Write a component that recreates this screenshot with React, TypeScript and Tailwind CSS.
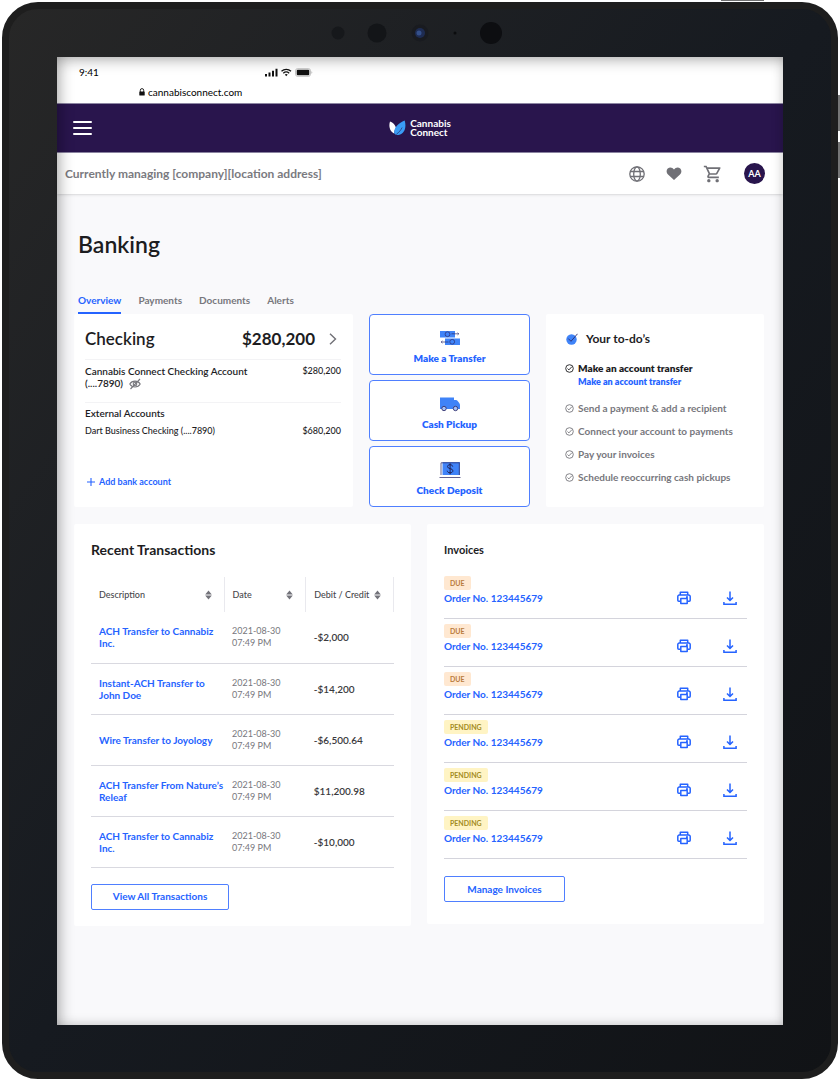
import { MdOutlineShoppingCart } from "react-icons/md";

type Transaction = { description: string; amount: string };

const tabs = ["Overview", "Payments", "Documents", "Alerts"];

const todos = [
    "Send a payment & add a recipient",
    "Connect your account to payments",
    "Pay your invoices",
    "Schedule reoccurring cash pickups",
];

const transactions: Transaction[] = [
    { description: "ACH Transfer to Cannabiz Inc.", amount: "-$2,000" },
    { description: "Instant-ACH Transfer to John Doe", amount: "-$14,200" },
    { description: "Wire Transfer to Joyology", amount: "-$6,500.64" },
    { description: "ACH Transfer From Nature’s Releaf", amount: "$11,200.98" },
    { description: "ACH Transfer to Cannabiz Inc.", amount: "-$10,000" },
];

const invoices = ["DUE", "DUE", "DUE", "PENDING", "PENDING", "PENDING"];

const TransferIcon = () => (
    <svg width="20" height="16" viewBox="0 0 20 16" fill="none">
        <path d="M0 1h15v6.500H0zM5 8.500h15V15H5z" fill="#3f83f8" />
        <g stroke="#2c2b6b" strokeWidth="0.7">
            <circle cx="7.5" cy="4.2" r="2.4" />
            <circle cx="12.2" cy="11.8" r="2.4" />
            <path d="M11.500 3.800h7M17.600 2.700l1.200 1.100-1.200 1.100M8.500 12H1.200M2.400 10.900 1.200 12l1.200 1.100" />
        </g>
    </svg>
);

const TruckIcon = () => (
    <svg width="20" height="16" viewBox="0 0 20 16" fill="none">
        <path d="M0 1.500h14v2.500h2.200c1 0 3.800 3.500 3.800 5V13H0z" fill="#3f83f8" />
        <circle cx="4" cy="12.500" r="2.200" fill="#a9c3f8" stroke="#34336e" strokeWidth="0.9" />
        <circle cx="15.500" cy="12.500" r="2.200" fill="#a9c3f8" stroke="#34336e" strokeWidth="0.9" />
    </svg>
);

const DepositIcon = () => (
    <svg width="22" height="16" viewBox="0 0 22 16" fill="none">
        <path d="M3.500 0H21v13H3.500z" fill="#3f83f8" />
        <path d="M2 13V.8h18.300V13M.5 15.500h21" stroke="#3b3a72" strokeWidth="0.8" />
        <path d="M13.700 4.600c-.2-1.200-1.100-1.900-2.600-1.900-1.600 0-2.600.8-2.600 1.900 0 2.700 5.400 1.300 5.400 4.200 0 1.200-1.100 2-2.800 2s-2.700-.8-2.900-2.100M11.100 1.300v11" stroke="#1f2057" strokeWidth="1" />
    </svg>
);

const PrinterIcon = () => (
    <svg width="14" height="14" viewBox="0 0 14 14" fill="none" stroke="currentColor" strokeWidth="1.500" strokeLinejoin="round">
        <path d="M3.300 4V1.200h7.400V4" />
        <path d="M3.300 10.200H1.800a1 1 0 0 1-1-1V5.500A1.500 1.500 0 0 1 2.300 4h9.400a1.500 1.500 0 0 1 1.500 1.500v3.700a1 1 0 0 1-1 1h-1.500" />
        <path d="M3.800 7.600h6.400v5H3.800zM9 5.900h2" />
    </svg>
);

const DownloadIcon = () => (
    <svg width="14" height="14" viewBox="0 0 14 14" fill="none" stroke="currentColor" strokeWidth="1.500">
        <path d="M7 .5v8.800M4 6.500l3 3 3-3M.9 11v2.200h12.200V11" />
    </svg>
);

const SortIcon = () => (
    <svg width="7" height="10" viewBox="0 0 7 10" fill="#73737a">
        <path d="M3.500.5 6.800 4.400H.2zM3.500 9.500.2 5.600h6.600z" />
    </svg>
);

const CheckCircle = () => (
    <svg className="shrink-0" width="9" height="9" viewBox="0 0 9 9" fill="none" stroke="currentColor" strokeWidth="0.9">
        <circle cx="4.500" cy="4.500" r="3.800" />
        <path d="m2.500 4.500 1.400 1.400 3-3.200" />
    </svg>
);

const Logo = () => (
    <div className="flex items-center gap-1">
        <svg width="17" height="16" viewBox="0 0 17 16">
            <path d="M1 1.500C4 2.700 6.600 5 7 8c-1.300 1.600-2 3.500-1.600 5.400C1.500 12.500-.8 7 1 1.500z" fill="#fff" />
            <path d="M15.700.6C17.500 7 16 13.500 9.500 15c-2 .4-4-.6-4.300-2.200C5.100 7.500 9.500 3 15.700.6z" fill="#3a9cf5" />
            <path d="M7.500 14.200c2.600-2 4.300-4 5.600-6.700" stroke="#29154d" strokeWidth="0.6" fill="none" />
        </svg>
        <p className="text-[10px] leading-[9px] font-bold text-white">
            Cannabis
            <br />
            Connect
        </p>
    </div>
);

const StatusBar = () => (
    <div className="bg-white pt-[7px] pb-[3px] text-black">
        <div className="flex h-4 items-center px-[22px] text-[10px]">
            <span className="w-[186px]">9:41</span>
            <svg width="48" height="9" viewBox="0 0 48 9">
                <path d="M0 6h2v2.500H0zM3.500 4.500h2v4h-2zM7 2.800h2v5.700H7zM10.500.8h2v7.700h-2z" fill="#111" />
                <g fill="none" stroke="#111" strokeWidth="1.300">
                    <path d="M16.500 3.200c2.700-2.500 6.800-2.500 9.500 0M18.300 5.200c1.700-1.500 4.200-1.500 5.900 0" />
                </g>
                <path d="M19.800 6.600c.8-.7 2.100-.7 2.900 0l-1.450 1.700z" fill="#111" />
                <rect x="30.500" y=".7" width="15" height="7.600" rx="2" fill="none" stroke="#aaa" strokeWidth=".7" />
                <rect x="31.700" y="1.700" width="12.600" height="5.600" rx="1" fill="#111" />
                <path d="M46.500 3.200c1 .5 1 2 0 2.600z" fill="#aaa" />
            </svg>
        </div>
        <div className="mt-1 flex h-4 items-center gap-[3px] pl-[82px] text-[10px]">
            <svg width="6" height="8" viewBox="0 0 6 8">
                <path d="M1.300 4V2.300a1.700 1.700 0 0 1 3.400 0V4" fill="none" stroke="#111" strokeWidth="0.900" />
                <rect x="0.300" y="3.400" width="5.400" height="4.200" rx="0.600" fill="#111" />
            </svg>
            <span>cannabisconnect.com</span>
        </div>
    </div>
);

const Navbar = () => (
    <header>
        <div className="grid h-[50px] grid-cols-[1fr_auto_1fr] items-center border-y border-[#8d86a3] bg-[#29154d] px-4">
            <button aria-label="Menu" className="flex w-[19px] flex-col gap-1">
                <span className="h-[2px] rounded-full bg-white" />
                <span className="h-[2px] rounded-full bg-white" />
                <span className="h-[2px] rounded-full bg-white" />
            </button>
            <Logo />
        </div>
        <div className="flex h-[41px] items-center justify-between bg-white pr-[18px] pl-2 text-[#7a7a80] shadow-sm">
            <p className="text-xs font-bold">Currently managing [company][location address]</p>
            <div className="flex items-center gap-[21px]">
                <button aria-label="Language">
                    <svg width="16" height="16" viewBox="0 0 16 16" fill="none" stroke="#707076" strokeWidth="1.300">
                        <circle cx="8" cy="8" r="7.200" />
                        <ellipse cx="8" cy="8" rx="3.300" ry="7.200" />
                        <path d="M1.400 5.500h13.200M1.400 10.500h13.200" />
                    </svg>
                </button>
                <button aria-label="Favorites">
                    <svg width="16" height="16" viewBox="0 0 16 16" fill="#707076">
                        <path d="M8 14 2 8.500C-.5 6 .5 1.800 4 1.500c1.700-.1 3 .7 4 2 1-1.300 2.300-2.100 4-2 3.500.3 4.500 4.500 2 7z" />
                    </svg>
                </button>
                <button aria-label="Cart">
                    <MdOutlineShoppingCart size={20} color="#707076" />
                </button>
                <button className="size-[21px] rounded-full bg-[#29154d] text-[9px] font-bold text-white">AA</button>
            </div>
        </div>
    </header>
);

const CheckingCard = () => (
    <section className="flex flex-col rounded-xs bg-white pt-[13px] pr-3 pb-[17px] pl-[11px] text-[#1d1d1f]">
        <div className="flex items-center border-b border-[#f3f3f5] pb-2">
            <h2 className="text-[17px] leading-6 font-semibold">Checking</h2>
            <span className="mr-[14px] ml-auto text-[17px] leading-6 font-bold">$280,200</span>
            <svg className="mr-1" width="8" height="12" viewBox="0 0 8 12" fill="none" stroke="#707076" strokeWidth="1.400">
                <path d="m1 .8 5.500 5.200L1 11.200" />
            </svg>
        </div>
        <div className="flex items-start justify-between border-b border-[#f3f3f5] pt-[5px] pb-3">
            <p className="text-[10px] leading-3 font-semibold">
                Cannabis Connect Checking Account
                <br />
                (....7890)
                <svg className="ml-[6px] inline" width="12" height="12" viewBox="0 0 12 12" fill="none" stroke="#77777d" strokeWidth="1.100">
                    <path d="M.8 6C3 2.100 9 2.100 11.200 6 9 9.900 3 9.900.8 6z" />
                    <circle cx="6" cy="6" r="1.800" />
                    <path d="M1.500 11 11 1" />
                </svg>
            </p>
            <span className="text-[9px] leading-3 font-medium">$280,200</span>
        </div>
        <h3 className="pt-1 text-[10px] leading-3 font-semibold">External Accounts</h3>
        <div className="mt-[6px] flex justify-between text-[9px] leading-3 font-medium">
            <span>Dart Business Checking (....7890)</span>
            <span>$680,200</span>
        </div>
        <button className="mt-auto ml-[2px] flex items-center gap-1 self-start text-[9px] leading-4 font-bold text-[#2563ff]">
            <svg width="8" height="8" viewBox="0 0 8 8" stroke="currentColor" strokeWidth="1.100">
                <path d="M4 0v8M0 4h8" />
            </svg>
            Add bank account
        </button>
    </section>
);

const actions = [
    { label: "Make a Transfer", icon: <TransferIcon /> },
    { label: "Cash Pickup", icon: <TruckIcon /> },
    { label: "Check Deposit", icon: <DepositIcon /> },
];

const QuickActions = () => (
    <div className="flex flex-col gap-[5px]">
        {actions.map((action) => (
            <button
                key={action.label}
                className="flex flex-1 flex-col items-center justify-center gap-1 rounded-sm border border-[#4f7fff] bg-white pt-[6px] text-[10px] leading-4 font-extrabold text-[#2563ff]"
            >
                {action.icon}
                {action.label}
            </button>
        ))}
    </div>
);

const TodoCard = () => (
    <section className="rounded-xs bg-white pr-4 pl-[19px] pt-[17px] pb-[21px] text-[#77777d]">
        <h2 className="flex items-center gap-2 text-xs leading-4 font-bold text-[#1d1d1f]">
            <svg width="13" height="12" viewBox="0 0 13 12" fill="none">
                <circle cx="6.500" cy="6.500" r="5.200" fill="#3f83f8" />
                <path d="M3.300 5.600 6 8.300 12.500.8" stroke="#2c2b6b" strokeWidth="0.900" />
            </svg>
            Your to-do’s
        </h2>
        <div className="mt-[13px] flex items-center gap-1 text-[10px] leading-4 font-extrabold text-[#1d1d1f]">
            <CheckCircle />
            Make an account transfer
        </div>
        <a href="#transfer" className="ml-[13px] block text-[9px] leading-3 font-extrabold text-[#2563ff]">
            Make an account transfer
        </a>
        <ul className="mt-3 flex flex-col gap-[7px]">
            {todos.map((todo) => (
                <li key={todo} className="flex items-center gap-1 text-[10px] leading-4 font-bold whitespace-nowrap">
                    <CheckCircle />
                    {todo}
                </li>
            ))}
        </ul>
    </section>
);

const TransactionsCard = () => (
    <section className="rounded-xs bg-white px-[17px] pt-4 pb-4">
        <h2 className="text-sm leading-5 font-bold text-[#1d1d1f]">Recent Transactions</h2>
        <table className="mt-[17px] w-full table-fixed border-collapse text-left">
            <thead>
                <tr className="h-[35px] text-[9px] text-[#48484c]">
                    <th className="w-[44%] border-r border-[#e9e9ee] px-2 font-medium">
                        <div className="flex items-center justify-between pr-1">
                            Description <SortIcon />
                        </div>
                    </th>
                    <th className="w-[27%] border-r border-[#e9e9ee] px-2 font-medium">
                        <div className="flex items-center justify-between pr-1">
                            Date <SortIcon />
                        </div>
                    </th>
                    <th className="border-r border-[#e9e9ee] px-2 font-medium">
                        <div className="flex items-center justify-between pr-1 whitespace-nowrap">
                            Debit / Credit <SortIcon />
                        </div>
                    </th>
                </tr>
            </thead>
            <tbody>
                {transactions.map((transaction, index) => (
                    <tr key={index} className="h-[51px] border-b border-[#d9d9e0]">
                        <td className="pl-2 text-[10px] leading-3 font-bold">
                            <a href="#transaction" className="block text-[#2563ff]">
                                {transaction.description}
                            </a>
                        </td>
                        <td className="px-2 text-[9px] leading-3 text-[#77777d]">
                            2021-08-30
                            <br />
                            07:49 PM
                        </td>
                        <td className="px-2 text-[10px] leading-3 font-semibold text-[#3a3a3d]">{transaction.amount}</td>
                    </tr>
                ))}
            </tbody>
        </table>
        <button className="mt-4 h-[26px] w-[138px] rounded-xs border border-[#4f7fff] text-[10px] font-bold text-[#2563ff]">
            View All Transactions
        </button>
    </section>
);

const InvoicesCard = () => (
    <section className="rounded-xs bg-white px-[17px] pt-4 pb-[22px]">
        <h2 className="text-[11px] leading-5 font-bold text-[#1d1d1f]">Invoices</h2>
        <ul className="mt-[11px]">
            {invoices.map((status, index) => (
                <li key={index} className="flex h-12 items-end justify-between border-b border-[#d4d4dc] pb-3 text-[#2563ff]">
                    <div className="flex flex-col items-start">
                        <span
                            className={
                                status === "DUE"
                                    ? "rounded-xs bg-[#ffe8d1] px-[6px] text-[7px] leading-[14px] font-bold text-[#b97a3c]"
                                    : "rounded-xs bg-[#fff4c4] px-[6px] text-[7px] leading-[14px] font-bold text-[#a38c22]"
                            }
                        >
                            {status}
                        </span>
                        <a href="#invoice" className="text-[10px] leading-4 font-bold">
                            Order No. 123445679
                        </a>
                    </div>
                    <div className="flex gap-8 pr-[10px] pb-px">
                        <button aria-label="Print">
                            <PrinterIcon />
                        </button>
                        <button aria-label="Download">
                            <DownloadIcon />
                        </button>
                    </div>
                </li>
            ))}
        </ul>
        <button className="mt-[17px] h-[26px] w-[121px] rounded-xs border border-[#4f7fff] text-[10px] font-bold text-[#2563ff]">
            Manage Invoices
        </button>
    </section>
);

const Cameras = () => (
    <svg className="absolute top-3 left-1/2 -translate-x-1/2" width="188" height="24" viewBox="-8 0 188 24">
        <circle cx="4" cy="12" r="6.500" fill="#16181b" />
        <circle cx="43" cy="12" r="9.500" fill="#131518" />
        <circle cx="86" cy="12" r="8.500" fill="#191b20" />
        <circle cx="86" cy="12" r="5" fill="#1e2c52" />
        <circle cx="85" cy="12" r="2.500" fill="#34508c" />
        <circle cx="121" cy="12" r="1.500" fill="#0b0c0e" />
        <circle cx="157" cy="12" r="11" fill="#0d0e11" />
    </svg>
);

const App = () => {
    return (
        <div className="relative min-h-screen bg-white px-[2px] pt-[2px] pb-px font-[Lato,sans-serif]">
            <div className="absolute top-0 right-[76px] h-px w-[43px] bg-[#707070]" />
            <div className="absolute top-[95px] right-0 h-9 w-[3px] bg-[#777]" />
            <div className="absolute top-[142px] right-0 h-9 w-[3px] bg-[#777]" />
            <div className="relative flex min-h-[calc(100vh-3px)] flex-col rounded-[36px] border-[7px] border-[#1e1e1e] bg-linear-to-br from-[#272727] via-[#161a20] to-[#111316] px-12 pt-12 pb-[47px]">
                <Cameras />
                <div className="relative flex flex-1 flex-col bg-[#f9f9fb]">
                    <StatusBar />
                    <Navbar />
                    <main className="pt-[34px] pr-[19px] pb-24 pl-[17px]">
                        <h1 className="ml-1 text-[23px] leading-8 font-semibold text-[#1d1d1f]">Banking</h1>
                        <nav className="mt-8 ml-1 flex gap-[17px] text-[10px] leading-4 font-bold text-[#77777d]">
                            {tabs.map((tab) => (
                                <a
                                    key={tab}
                                    href={`#${tab.toLowerCase()}`}
                                    className={tab === "Overview" ? "border-b-2 border-[#2563ff] pb-1 text-[#2563ff]" : "pb-1"}
                                >
                                    {tab}
                                </a>
                            ))}
                        </nav>
                        <div className="grid min-h-[193px] grid-cols-[279fr_161fr_218fr] gap-4">
                            <CheckingCard />
                            <QuickActions />
                            <TodoCard />
                        </div>
                        <div className="mt-[17px] grid grid-cols-2 items-start gap-4">
                            <TransactionsCard />
                            <InvoicesCard />
                        </div>
                    </main>
                    <div className="pointer-events-none absolute inset-0 shadow-[inset_10px_0_14px_-6px_rgba(0,0,0,0.25),inset_0_10px_14px_-6px_rgba(0,0,0,0.25),inset_-6px_-6px_12px_-5px_rgba(0,0,0,0.14)]" />
                </div>
            </div>
        </div>
    );
};

export default App;
